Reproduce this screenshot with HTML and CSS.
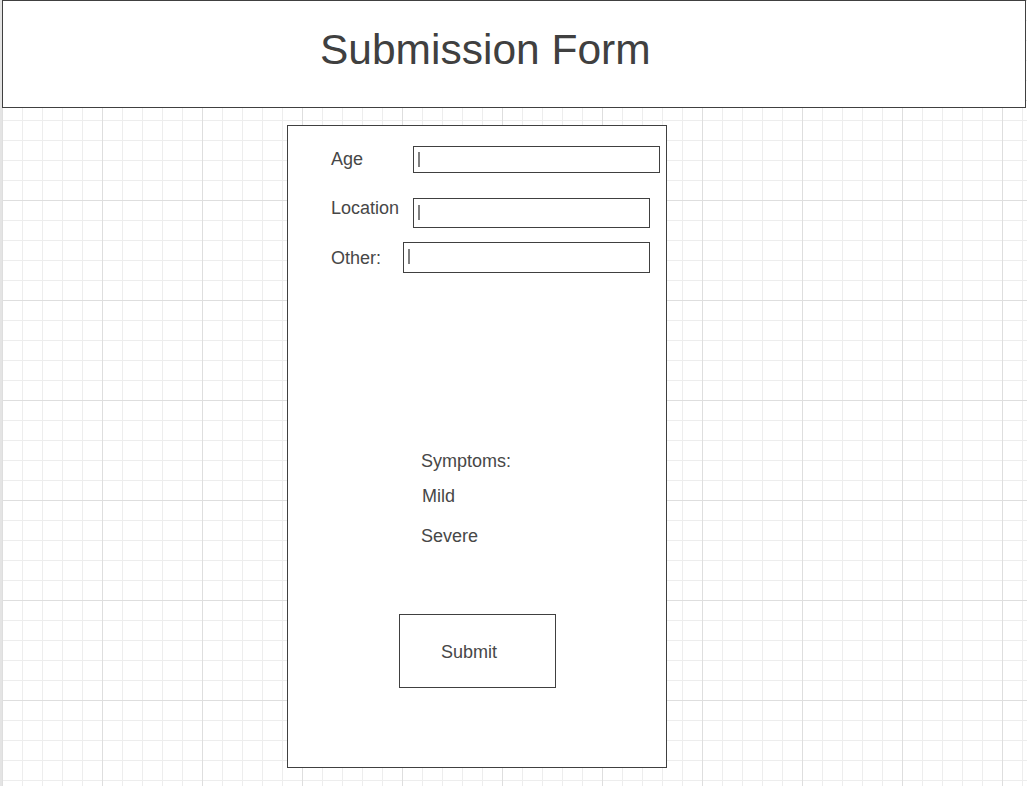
FILE: index.html
```html
<!DOCTYPE html>
<html lang="en">
<head>
<meta charset="utf-8">
<title>Submission Form</title>
<link rel="stylesheet" href="styles.css">
</head>
<body>
<div class="canvas">
  <header class="header">
    <h1 class="title">Submission Form</h1>
  </header>
  <main class="card">
    <div class="row row-age">
      <span class="label label-age">Age</span>
      <div class="field field-age"><span class="caret"></span></div>
    </div>
    <div class="row row-location">
      <span class="label label-location">Location</span>
      <div class="field field-location"><span class="caret"></span></div>
    </div>
    <div class="row row-other">
      <span class="label label-other">Other:</span>
      <div class="field field-other"><span class="caret"></span></div>
    </div>
    <div class="symptoms">
      <span class="label sym-title">Symptoms:</span>
      <span class="label sym-mild">Mild</span>
      <span class="label sym-severe">Severe</span>
    </div>
    <div class="submit">Submit</div>
  </main>
</div>
</body>
</html>
```

FILE: styles.css
```css
html, body {
  margin: 0;
  padding: 0;
  background: #ffffff;
}

.canvas {
  width: 1027px;
  height: 786px;
  overflow: hidden;
  box-sizing: border-box;
  border-left: 2px solid #e4e4e4;
  background-color: #ffffff;
  background-image:
    linear-gradient(to right, #dedede 1px, transparent 1px),
    linear-gradient(to bottom, #dedede 1px, transparent 1px),
    linear-gradient(to right, #ededed 1px, transparent 1px),
    linear-gradient(to bottom, #ededed 1px, transparent 1px);
  background-size: 100px 100px, 100px 100px, 20px 20px, 20px 20px;
  background-position: 0 0, 0 0, 0 0, 0 0;
  font-family: "Liberation Sans", Arial, sans-serif;
  color: #444444;
}

.header {
  box-sizing: border-box;
  width: 1024px;
  height: 108px;
  border: 1px solid #404040;
  background: #ffffff;
  display: flex;
  align-items: center;
  padding-left: 317px;
  padding-bottom: 8px;
}

.title {
  margin: 0;
  font-size: 42.5px;
  font-weight: normal;
  line-height: 48px;
  color: #404040;
}

.card {
  box-sizing: border-box;
  width: 380px;
  height: 643px;
  margin-top: 17px;
  margin-left: 285px;
  border: 1px solid #404040;
  background: #ffffff;
  padding: 20px 0 0 43px;
  display: flex;
  flex-direction: column;
}

.row {
  display: flex;
  align-items: center;
}

.label {
  font-size: 18px;
  line-height: 20px;
  color: #474747;
  white-space: nowrap;
}

.label-age { width: 82px; margin-bottom: 2px; }
.label-location { width: 82px; align-self: flex-start; }
.label-other { width: 72px; }

.field {
  box-sizing: border-box;
  border: 1px solid #404040;
  background: #ffffff;
}

.caret {
  display: block;
  width: 2px;
  height: 15px;
  background: #808080;
}

.field-age {
  width: 247px;
  height: 27px;
  padding: 5px 0 0 4px;
}

.row-location { margin-top: 25px; }
.field-location {
  width: 237px;
  height: 30px;
  padding: 6px 0 0 4px;
}

.row-other { margin-top: 14px; }
.field-other {
  width: 247px;
  height: 31px;
  padding: 6px 0 0 4px;
}

.symptoms {
  margin-top: 178px;
  margin-left: 90px;
  display: flex;
  flex-direction: column;
}

.sym-mild { margin-top: 15px; margin-left: 1px; }
.sym-severe { margin-top: 20px; }

.submit {
  box-sizing: border-box;
  width: 157px;
  height: 74px;
  margin-top: 68px;
  margin-left: 68px;
  border: 1px solid #404040;
  font-size: 18px;
  line-height: 20px;
  color: #474747;
  display: flex;
  align-items: center;
  padding-left: 41px;
  padding-top: 2px;
}
```
